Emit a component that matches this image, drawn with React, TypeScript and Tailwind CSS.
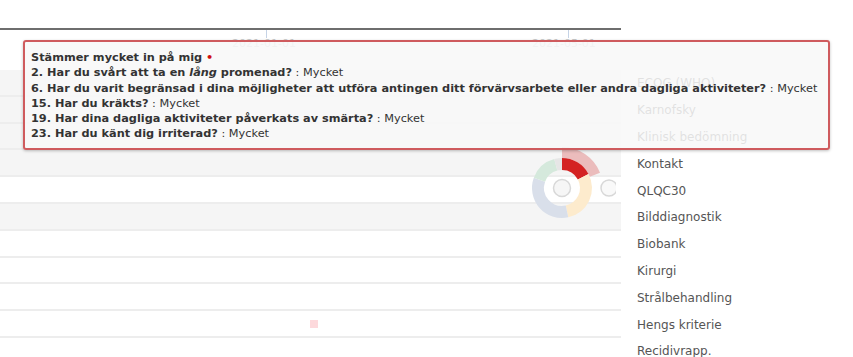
import React from "react";

const labels = [
  "ECOG (WHO)",
  "Karnofsky",
  "Klinisk bedömning",
  "Kontakt",
  "QLQC30",
  "Bilddiagnostik",
  "Biobank",
  "Kirurgi",
  "Strålbehandling",
  "Hengs kriterie",
  "Recidivrapp.",
];
const shaded = [true, true, true, true, false, true, false, false, false, false, false];

function arc(cx: number, cy: number, r0: number, r1: number, a0: number, a1: number) {
  const rad = (a: number) => ((a - 90) * Math.PI) / 180;
  const p = (r: number, a: number) => `${cx + r * Math.cos(rad(a))} ${cy + r * Math.sin(rad(a))}`;
  const large = a1 - a0 > 180 ? 1 : 0;
  return `M ${p(r1, a0)} A ${r1} ${r1} 0 ${large} 1 ${p(r1, a1)} L ${p(r0, a1)} A ${r0} ${r0} 0 ${large} 0 ${p(r0, a0)} Z`;
}

function Donut() {
  const cx = 42, cy = 42;
  return (
    <svg width="96" height="84" viewBox="0 0 96 84" className="absolute left-[520px] top-[146px]">
      <path d={arc(cx, cy, 30, 41, 0, 68)} fill="#ebbcbc" />
      <path d={arc(cx, cy, 18, 30, 0, 62)} fill="#d42222" />
      <path d={arc(cx, cy, 18, 30, 62, 168)} fill="#fdebcd" />
      <path d={arc(cx, cy, 18, 30, 168, 290)} fill="#d9dfea" />
      <path d={arc(cx, cy, 18, 30, 290, 345)} fill="#d5e9dc" />
      <path d={arc(cx, cy, 18, 30, 345, 360)} fill="#e6e6e6" />
      <circle cx={cx} cy={cy} r="8.5" fill="#f6f6f6" stroke="#d8d8d8" strokeWidth="1.5" />
      <circle cx={cx + 47} cy={cy} r="8" fill="#f9f9f9" stroke="#d8d8d8" strokeWidth="1.5" />
    </svg>
  );
}

export default function App() {
  return (
    <div
      className="relative w-[853px] h-[357px] overflow-hidden bg-white text-[12px]"
      style={{ fontFamily: '"DejaVu Sans", "Noto Sans", sans-serif' }}
    >
      <div className="flex">
        <div className="w-[621px] shrink-0">
          <div className="h-[28px]" />
          <div className="h-[2px] bg-[#6e6e6e]" />
          <div className="relative h-[40px]">
            <div className="absolute left-[266px] top-0 h-[8px] w-px bg-[#c5d3e6]" />
            <div className="absolute left-[568px] top-0 h-[8px] w-px bg-[#c5d3e6]" />
            <div className="flex pt-[6px] text-[11px] text-[#c9c9c9]">
              <span className="ml-[232px]">2021-01-01</span>
              <span className="ml-[236px]">2021-05-01</span>
            </div>
          </div>
          {labels.map((l, i) => (
            <div
              key={l}
              className={`h-[26.8px] border-b-2 border-[#ededed] ${shaded[i] ? "bg-[#f5f5f5]" : "bg-white"} flex items-center`}
            >
              {i === 9 && <div className="ml-[310px] w-[8px] h-[8px] bg-[#fdd9dc]" />}
            </div>
          ))}
        </div>
        <div className="pl-[16px] pt-[70px] flex flex-col text-[#555]">
          {labels.map((l) => (
            <div key={l} className="h-[26.8px] flex items-center">
              {l}
            </div>
          ))}
        </div>
      </div>

      <Donut />

      <div className="absolute left-[23px] top-[40px] w-[807px] h-[110px] rounded-[3px] border-2 border-[#cf5b5e] bg-[rgba(248,248,248,0.86)] shadow-[0_1px_3px_rgba(0,0,0,0.25)] px-[6px] pt-[8px] text-[11.3px] leading-[15.3px] text-[#333]">
        <div className="font-bold">
          Stämmer mycket in på mig <span className="text-[#d01010]">•</span>
        </div>
        <div>
          <b>
            2. Har du svårt att ta en <i>lång</i> promenad?
          </b>{" "}
          : Mycket
        </div>
        <div>
          <b>6. Har du varit begränsad i dina möjligheter att utföra antingen ditt förvärvsarbete eller andra dagliga aktiviteter?</b> : Mycket
        </div>
        <div>
          <b>15. Har du kräkts?</b> : Mycket
        </div>
        <div>
          <b>19. Har dina dagliga aktiviteter påverkats av smärta?</b> : Mycket
        </div>
        <div>
          <b>23. Har du känt dig irriterad?</b> : Mycket
        </div>
      </div>
    </div>
  );
}
